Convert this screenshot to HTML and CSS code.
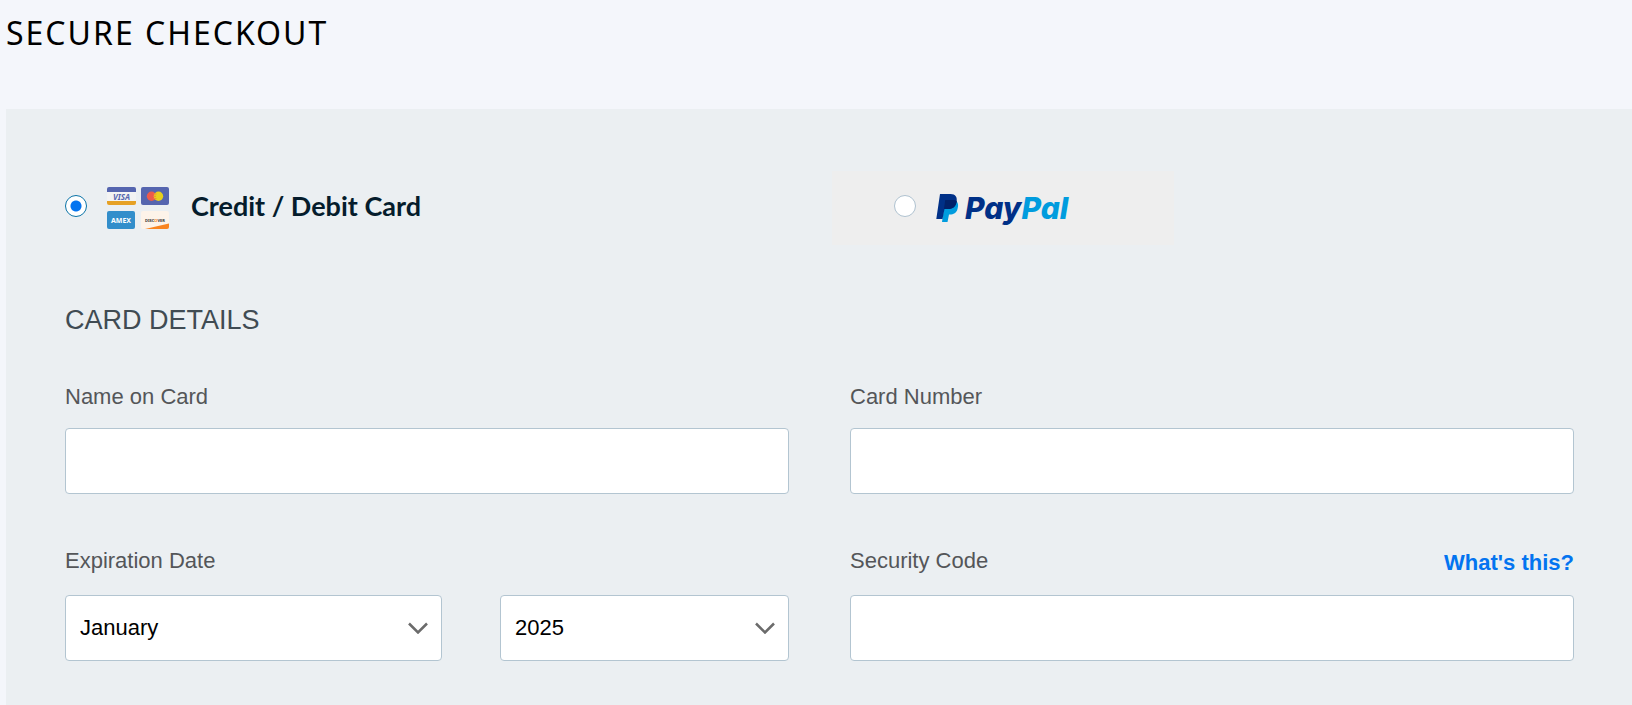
FILE: index.html
```html
<!DOCTYPE html>
<html lang="en">
<head>
<meta charset="utf-8">
<title>Secure Checkout</title>
<meta name="viewport" content="width=device-width, initial-scale=1">
<link rel="stylesheet" href="styles.css">
</head>
<body>
<h1 class="page-title">SECURE CHECKOUT</h1>
<form class="panel">
  <div class="methods">
    <label class="method">
      <input class="radio" type="radio" name="method" checked>
      <svg class="cards" viewBox="0 0 62 42" aria-hidden="true">
        <defs>
          <clipPath id="visa"><rect width="29" height="18" rx="2"/></clipPath>
          <clipPath id="disc"><rect x="34" y="24" width="28" height="18" rx="2"/></clipPath>
        </defs>
        <g clip-path="url(#visa)">
          <rect width="29" height="18" fill="#f3f3f3"/>
          <rect width="29" height="5" fill="#5565af"/>
          <rect y="14" width="29" height="4" fill="#e6a125"/>
        </g>
        <text class="brand brand-visa" x="14.5" y="12.5">VISA</text>
        <rect x="34" width="28" height="18" rx="2" fill="#5565af"/>
        <circle cx="44.5" cy="9.3" r="4.7" fill="#ed5a4b"/>
        <circle cx="51.5" cy="9.3" r="4.7" fill="#e7d01d"/>
        <path d="M46.5 7h3M46 9.3h3M46.5 11.6h3" stroke="#f08a35"/>
        <rect y="24" width="28" height="18" rx="2" fill="#328ecb"/>
        <text class="brand brand-amex" x="14" y="35.8">AMEX</text>
        <g clip-path="url(#disc)">
          <rect x="34" y="24" width="28" height="18" fill="#fdf3e9"/>
          <path d="M38 42L62 36.5V42Z" fill="#f98420"/>
        </g>
        <text class="brand brand-discover" x="48" y="34.5">DISC<tspan fill="#f98420">O</tspan>VER</text>
      </svg>
      <span class="method-name">Credit / Debit Card</span>
    </label>
    <label class="method method-paypal">
      <input class="radio" type="radio" name="method">
      <svg class="paypal" viewBox="0 0 144 46" role="img" aria-label="PayPal">
        <path d="M9 14H20C22.500 15.500 22.500 19 21.500 22C20.500 26 17.500 27.500 14 27.500H13L11.500 35H6Z" fill="#009cde"/>
        <path d="M4 7H14.500C19.500 7 21.500 10 20.500 15C19.500 20 16.500 22 12 22H8.500L6.500 32H0.300Z" fill="#003087"/>
        <path d="M9.200 13H18.500L20.800 14C20 19.500 17 22 12 22H8Z" fill="#012169"/>
        <text class="wordmark" x="29" y="32">Pay<tspan fill="#009cde">Pal</tspan></text>
      </svg>
    </label>
  </div>
  <h2 class="section-title">CARD DETAILS</h2>
  <div class="fields">
    <div class="field">
      <label class="caption" for="name">Name on Card</label>
      <input class="control" id="name" type="text">
    </div>
    <div class="field">
      <label class="caption" for="number">Card Number</label>
      <input class="control" id="number" type="text" inputmode="numeric">
    </div>
    <div class="field">
      <div class="caption-row"><label class="caption" for="month">Expiration Date</label></div>
      <div class="expiry">
        <div class="picker">
          <select class="control" id="month"><option>January</option><option>February</option><option>March</option></select>
          <svg class="chevron" viewBox="0 0 20 12" aria-hidden="true"><path d="M1 1.500L10 10.500L19 1.500"/></svg>
        </div>
        <div class="picker">
          <select class="control" aria-label="Expiration year"><option>2025</option><option>2026</option><option>2027</option></select>
          <svg class="chevron" viewBox="0 0 20 12" aria-hidden="true"><path d="M1 1.500L10 10.500L19 1.500"/></svg>
        </div>
      </div>
    </div>
    <div class="field">
      <div class="caption-row">
        <label class="caption" for="code">Security Code</label>
        <a class="help" href="#code">What's this?</a>
      </div>
      <input class="control" id="code" type="text" inputmode="numeric">
    </div>
  </div>
</form>
</body>
</html>
```

FILE: styles.css
```css
* {
  box-sizing: border-box;
}

body {
  margin: 0;
  min-height: 100vh;
  display: flex;
  flex-direction: column;
  background: #f4f6fb;
  color: #000;
  font: 22px/26px "Liberation Sans", Arial, sans-serif;
}

.page-title {
  margin: 0;
  padding: 13px 6px 56px;
  font: 400 32px/40px "Noto Sans", sans-serif;
  letter-spacing: 2px;
}

.panel {
  flex: 1;
  margin-left: 6px;
  padding: 62px 58px 40px 59px;
  background: #ebeff2;
}

.methods,
.fields {
  display: grid;
  grid-template-columns: repeat(2, minmax(0, 1fr));
  column-gap: 61px;
}

.method {
  display: flex;
  align-items: center;
  height: 74px;
  padding-bottom: 4px;
}

.method-paypal {
  width: 342px;
  margin-left: -18px;
  padding-left: 62px;
  background: #eee;
}

.radio {
  appearance: none;
  flex: none;
  width: 22px;
  height: 22px;
  margin: 0;
  border: 1px solid #afc2d0;
  border-radius: 50%;
  background: #fff;
}

.radio:checked {
  border-color: #0b74a8;
  background: radial-gradient(circle, #0374f0 5px, #fff 6px);
}

.cards {
  width: 62px;
  height: 42px;
  margin: 4px 22px 0 20px;
}

.brand {
  font: 700 7px "Noto Sans", sans-serif;
  text-anchor: middle;
  fill: #fff;
}

.brand-visa {
  font-size: 8px;
  font-style: italic;
  fill: #5565af;
}

.brand-discover {
  font-size: 4px;
  fill: #333;
}

.method-name {
  font: 700 27px/32px Lato, sans-serif;
  color: #051c2c;
}

.paypal {
  width: 144px;
  height: 46px;
  margin: 8px 0 0 20px;
}

.wordmark {
  font: italic 800 30px Inter, sans-serif;
  fill: #003087;
}

.section-title {
  margin: 59px 0 48px;
  font-size: 27px;
  font-weight: 400;
  line-height: 32px;
  color: #404b53;
}

.fields {
  row-gap: 54px;
}

.caption {
  display: block;
  color: #545659;
}

.field > .caption {
  margin-bottom: 18px;
}

.caption-row {
  display: flex;
  justify-content: space-between;
  height: 30px;
  margin-bottom: 17px;
}

.help {
  padding-top: 2px;
  font-weight: 700;
  color: #0374f0;
  text-decoration: none;
}

.control {
  appearance: none;
  display: block;
  width: 100%;
  height: 66px;
  padding: 0 14px;
  border: 1px solid #b3c5d1;
  border-radius: 4px;
  background: #fff;
  color: #000;
  font: inherit;
}

.expiry {
  display: grid;
  grid-template-columns: 377fr 289fr;
  column-gap: 58px;
}

.picker {
  display: grid;
  align-items: center;
}

.picker > * {
  grid-area: 1 / 1;
}

.chevron {
  justify-self: end;
  width: 20px;
  height: 12px;
  margin-right: 14px;
  fill: none;
  stroke: #6b6b6b;
  stroke-width: 2.5;
  pointer-events: none;
}
```
